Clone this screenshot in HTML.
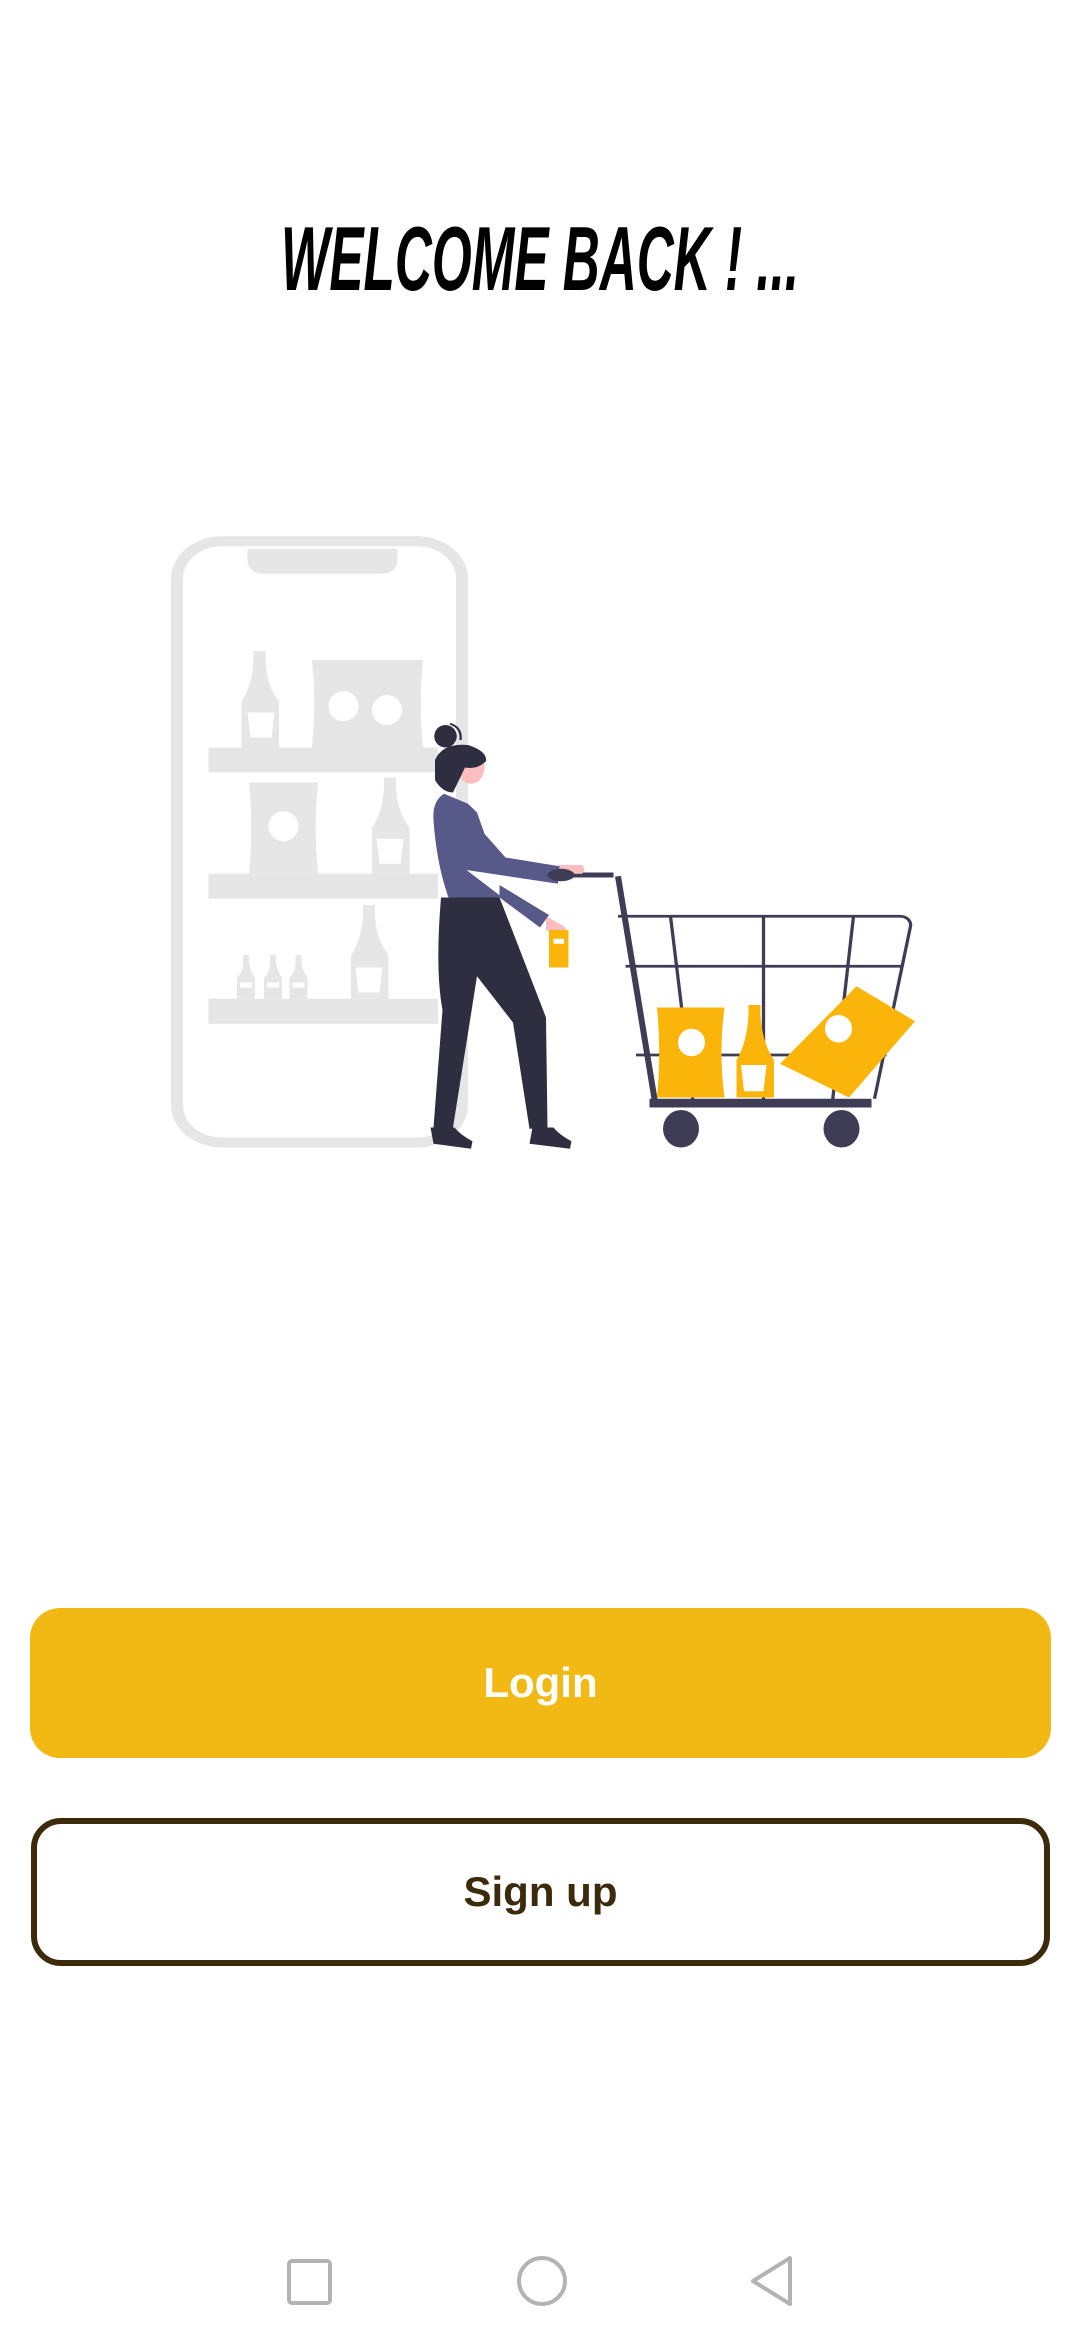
<!DOCTYPE html>
<html><head><meta charset="utf-8"><style>
html,body{margin:0;padding:0;background:#fff;}
body{width:1080px;height:2340px;position:relative;overflow:hidden;font-family:"Liberation Sans",sans-serif;}
.title{position:absolute;left:0;width:1080px;top:210px;text-align:center;}
.title span{display:inline-block;font-size:91px;font-weight:bold;font-style:italic;line-height:100px;transform:scaleX(0.563);transform-origin:center;white-space:nowrap;color:#000;}
.btn{position:absolute;left:30px;width:1021px;box-sizing:border-box;border-radius:30px;text-align:center;font-weight:bold;font-size:42px;}
.login{top:1608px;height:150px;background:#f2b814;color:#fff;line-height:150px;}
.signup{top:1818px;height:148px;border:6px solid #3d2a0b;color:#3d2a0b;line-height:136px;left:31px;width:1019px;}
</style></head><body>
<div class="title"><span>WELCOME BACK ! ...</span></div>
<svg style="position:absolute;left:0;top:0" width="1080" height="1200" viewBox="0 0 1080 1200">
<g transform="translate(150,520) scale(1.5,1.25) translate(-150,-520)">
<rect x="168" y="537" width="190" height="481" rx="30" fill="none" stroke="#e6e6e6" stroke-width="8"/>
<path d="M215 543 H315 V553 a10 10 0 0 1 -10 10 H225 a10 10 0 0 1 -10 -10Z" fill="#e6e6e6"/>
<rect x="358" y="648" width="3" height="120" fill="#e6e6e6"/>
<rect x="189" y="702" width="153" height="20" fill="#e6e6e6"/>
<rect x="189" y="803" width="153" height="20" fill="#e6e6e6"/>
<rect x="189" y="903" width="153" height="20" fill="#e6e6e6"/>
<g fill="#e6e6e6">
<path d="M219 625h8v8q1 20 9 32v37h-25v-37q7-12 8-32z"/>
<path d="M258 632h74q-3 35 0 70h-74q3-35 0-70z"/>
<path d="M216 730h46q-3 35 0 73h-46q3-38 0-73z"/>
<path d="M306 726h8v8q1 20 9 32v37h-25v-37q7-12 8-32z"/>
<path d="M292 828h8v8q1 20 9 32v35h-25v-35q7-12 8-32z"/>
<path d="M212 868h4v6q1 8 4 12v17h-12v-17q4-4 4-12z"/>
<path d="M230 868h4v6q1 8 4 12v17h-12v-17q4-4 4-12z"/>
<path d="M247 868h4v6q1 8 4 12v17h-12v-17q4-4 4-12z"/>
</g>
<g fill="#fff">
<ellipse cx="279" cy="669" rx="10" ry="12"/><ellipse cx="308" cy="672" rx="10" ry="12"/><ellipse cx="239" cy="765" rx="10" ry="12"/>
<path d="M215 674h18l-2 20h-14z"/><path d="M301 775h18l-2 20h-14z"/><path d="M287 878h18l-2 20h-14z"/>
<rect x="210" y="890" width="8" height="4"/><rect x="228" y="890" width="8" height="4"/><rect x="245" y="890" width="8" height="4"/>
</g>
<g fill="none" stroke="#3f3d56" stroke-width="2.2">
<path d="M462 837 H650 a7 7 0 0 1 7 8 L633 983"/>
<path d="M467 877 H652"/><path d="M474 948 H641"/>
<path d="M497 837 L512 985"/><path d="M559 837 V985"/><path d="M619 837 L605 985"/>
</g>
<g fill="#fbb40a">
<path d="M488 910h45q-4 36 0 72h-45q3-36 0-72z"/>
<path d="M549 908h8v8q1 22 9 36v30h-25v-30q7-14 8-36z"/>
<path d="M570 955 L621 893 L660 921 L616 982 Z"/>
</g>
<g fill="#fff"><ellipse cx="511" cy="938" rx="9" ry="11"/><ellipse cx="609" cy="927" rx="9" ry="11"/><path d="M544 956h17l-2 21h-13z"/></g>
<path d="M462 805 L487 988" fill="none" stroke="#3f3d56" stroke-width="4"/>
<path d="M417 804 H459" stroke="#3f3d56" stroke-width="4"/>
<rect x="483" y="983" width="148" height="7" fill="#3f3d56"/>
<ellipse cx="504" cy="1007" rx="12" ry="15" fill="#3f3d56"/><ellipse cx="611" cy="1007" rx="12" ry="15" fill="#3f3d56"/>
<path d="M344 822 H383 L414 918 L415 1007 L403 1007 L392 922 L368 885 L352 1006 L339 1006 L345 912 Q340 880 344 822Z" fill="#2f2e41"/>
<path d="M337 1006h16q4 6 12 11l-1 6-25-4z" fill="#2f2e41"/>
<path d="M405 1006h14q4 6 12 11l-1 6-27-4z" fill="#2f2e41"/>
<path d="M422 796h16q3 4 0 7h-16z" fill="#fbbebe"/>
<path d="M414 837l12 8q4 6-2 9l-10-6z" fill="#fbbebe"/>
<path d="M416 848h13v30h-13z" fill="#fbb40a"/><rect x="419" y="855" width="7" height="4" fill="#fff"/>
<path d="M346 739 Q338 745 339 760 Q341 795 349 822 H383 L385 822 L361 800 L422 811 L423 797 L387 790 L373 771 L368 754 L362 747 Z" fill="#575a89"/>
<path d="M383 812 L416 836 L410 846 L383 822Z" fill="#575a89"/>
<ellipse cx="364" cy="718" rx="9" ry="13" fill="#fbbebe"/>
<path d="M340 712 Q345 698 362 700 Q375 705 374 713 Q368 720 360 718 L352 738 Q345 738 340 728 Z" fill="#2f2e41"/>
<ellipse cx="347" cy="693" rx="7.5" ry="9" fill="#2f2e41"/>
<path d="M350 683 Q358 686 357 696" fill="none" stroke="#2f2e41" stroke-width="1.5"/>
<ellipse cx="424" cy="804" rx="9" ry="5" fill="#3f3d56"/>
</g>
</svg>
<div class="btn login">Login</div>
<div class="btn signup">Sign up</div>
<svg style="position:absolute;left:0;top:0" width="1080" height="2340">
<rect x="289" y="2261" width="41" height="42" rx="3" fill="none" stroke="#b3b3b3" stroke-width="4"/>
<circle cx="542" cy="2281" r="23" fill="none" stroke="#b3b3b3" stroke-width="4"/>
<path d="M753 2281 L790 2258 V2304 Z" fill="none" stroke="#b3b3b3" stroke-width="4" stroke-linejoin="round"/>
</svg>
</body></html>
